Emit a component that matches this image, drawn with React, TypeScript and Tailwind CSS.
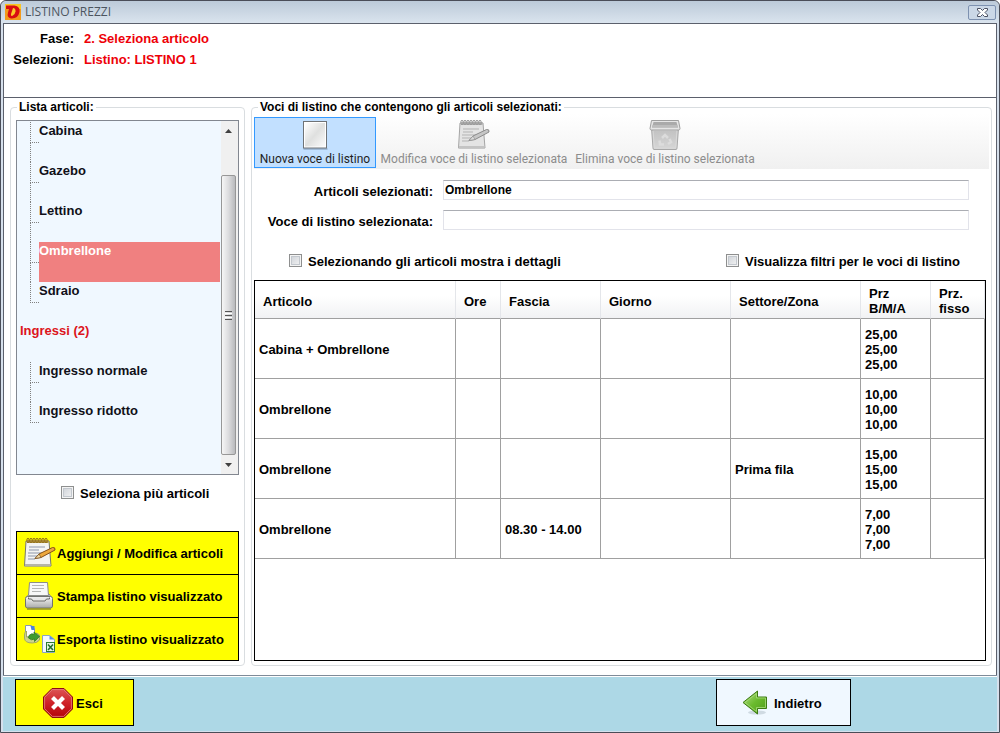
import React from "react"
import clsx from "clsx"

interface TreeItemProps {
  label: string
  selected?: boolean
  last?: boolean
}

interface PriceRow {
  articolo: string
  ore?: string
  fascia?: string
  giorno?: string
  settore?: string
  prezzi: string[]
  fisso?: string
}

const rows: PriceRow[] = [
  { articolo: "Cabina + Ombrellone", prezzi: ["25,00", "25,00", "25,00"] },
  { articolo: "Ombrellone", prezzi: ["10,00", "10,00", "10,00"] },
  { articolo: "Ombrellone", settore: "Prima fila", prezzi: ["15,00", "15,00", "15,00"] },
  { articolo: "Ombrellone", fascia: "08.30 - 14.00", prezzi: ["7,00", "7,00", "7,00"] },
]

const NotepadIcon = ({ gray = false }: { gray?: boolean }) => (
  <svg width="32" height="32" viewBox="0 0 32 32" className="shrink-0">
    <path d="M2 4h23l2 25H0.500z" fill={gray ? "#e4e4e4" : "#f4f4f2"} stroke={gray ? "#a5a5a5" : "#77776c"} />
    <path d="M1 27h25.500v2.500H.5z" fill={gray ? "#c4c4c4" : "#b5b5aa"} />
    <path d="M3 4.500h21.500" stroke={gray ? "#b0b0b0" : "#b39540"} strokeWidth="3" />
    {[4, 7, 10, 13, 16, 19, 22].map((x) => (
      <ellipse key={x} cx={x} cy="3.500" rx="1.200" ry="2.300" fill="none" stroke={gray ? "#9a9a9a" : "#93701c"} />
    ))}
    <path
      d="M5 10h16M5 13h10M4 16h16M4 19h9M4 22h7"
      stroke={gray ? "#b3b3b3" : "#8d96ab"}
      strokeWidth="1"
      fill="none"
    />
    <path d="M11 21.500l4-4.500L28.500 10.500q3-.5 2.500 2.500L17 20.500z" fill={gray ? "#c6c6c6" : "#eda83d"} stroke={gray ? "#8b8b8b" : "#85501a"} />
    <path d="M11 21.500l4-4.500 2 3.500z" fill={gray ? "#dadada" : "#f3d9a4"} stroke={gray ? "#8b8b8b" : "#6b4a20"} strokeWidth=".6" />
  </svg>
)

const PageIcon = () => (
  <svg width="32" height="32" viewBox="0 0 32 32">
    <defs>
      <linearGradient id="page" x1="0" y1="0" x2="1" y2="1">
        <stop offset="0" stopColor="#ffffff" />
        <stop offset=".5" stopColor="#dfe0df" />
        <stop offset="1" stopColor="#fafafa" />
      </linearGradient>
    </defs>
    <path d="M4.500 30h24" stroke="#7591ad" strokeWidth="1.500" opacity=".6" />
    <rect x="4.500" y="2.500" width="23" height="26.500" fill="#fff" stroke="#6f7376" />
    <rect x="6" y="4" width="20" height="23.500" fill="url(#page)" />
  </svg>
)

const BinIcon = () => (
  <svg width="32" height="32" viewBox="0 0 32 32">
    <defs>
      <linearGradient id="bin" x1="0" y1="0" x2="0" y2="1">
        <stop offset="0" stopColor="#c0c0c0" />
        <stop offset="1" stopColor="#d6d6d6" />
      </linearGradient>
    </defs>
    <path d="M2.500 9h27l-1.500 20q0 1.500-1 1.500H5q-1 0-1-1.500z" fill="url(#bin)" stroke="#a8a8a8" />
    <path d="M4 11.500h24l-1.300 17.500H5.300z" fill="none" stroke="#d9d9d9" />
    <path d="M2.500 1.500h27l1.500 8q0 1.500-1.500 1.500h-27q-1.500 0-1.500-1.500z" fill="#e6e6e6" stroke="#a0a0a0" />
    <path d="M4.500 3h23l1.500 5.500H3z" fill="#aaaaaa" />
    <path d="M3.700 6h24.600l.7 2.500H3z" fill="#bcbcbc" />
    <path d="M13 19l3-3 3 3M20.500 20l1.500 3-3 2M15 25.500h-4l-.5-4" fill="none" stroke="#dcdcdc" strokeWidth="2.500" />
  </svg>
)

const PrinterIcon = () => (
  <svg width="32" height="32" viewBox="0 0 32 32" className="shrink-0">
    <defs>
      <linearGradient id="printer" x1="0" y1="0" x2="0" y2="1">
        <stop offset="0" stopColor="#fafafa" />
        <stop offset="1" stopColor="#a9aaa9" />
      </linearGradient>
    </defs>
    <path d="M5 14h20l3 4H2z" fill="#c9cac8" stroke="#8a8b88" />
    <path d="M5.500 2.500h18l1 13h-20z" fill="#f7f7f7" stroke="#8b8c8a" />
    <path d="M8 5.500h12M8 8.500h12M8 11.500h9" stroke="#b4b5b4" />
    <rect x="1.500" y="16.500" width="27" height="11.500" rx="2" fill="url(#printer)" stroke="#71726f" />
    <path d="M4.500 17.500v1.500h3l1.500 2h12l1.500-2h3v-1.500" fill="#e8e8e7" stroke="#6a6b68" />
    <path d="M3 29h24" stroke="#8f8f2e" strokeWidth="1.500" />
  </svg>
)

const ExportIcon = () => (
  <svg width="32" height="32" viewBox="0 0 32 32" className="shrink-0">
    <path d="M1.500 2.500h6l3 3V14h-9z" fill="#fff" stroke="#8896b0" />
    <path d="M6.500 3h4v4h-3z" fill="#4a82e0" />
    <path d="M.5 12q0-3 2-4v6h8l2-4 3 2v5q-2 3-7 3-8 0-8-5z" fill="#cdd58a" stroke="#a3a868" />
    <path d="M5 12.500q3-3 5-1V9l5.500 4.500-5 5V16q-3 2-6-1z" fill="#3f9b2f" stroke="#2a741e" strokeWidth=".7" />
    <path d="M18.500 12.500h7l5 4V29.500h-12z" fill="#f4f8fd" stroke="#8aa3c5" />
    <path d="M25.500 12.500v4h5z" fill="#5a8fe6" />
    <rect x="22.500" y="19.500" width="8" height="9" fill="#e7f5e5" stroke="#2c7a35" />
    <path d="M24 21.500l5 5.500M29 21.500L24 27" stroke="#23702c" strokeWidth="1.600" />
  </svg>
)

const StopIcon = () => (
  <svg width="32" height="32" viewBox="0 0 32 32" className="shrink-0">
    <defs>
      <linearGradient id="stop" x1="0" y1="0" x2="0" y2="1">
        <stop offset="0" stopColor="#dc5656" />
        <stop offset=".5" stopColor="#cf2228" />
        <stop offset="1" stopColor="#b30309" />
      </linearGradient>
    </defs>
    <path d="M10 1.500h12L30.500 10v12L22 30.500H10L1.500 22V10z" fill="url(#stop)" stroke="#8c0d10" />
    <path d="M10.400 2.600h11.200L29.400 10.400v11.200L21.600 29.400H10.400L2.600 21.600V10.400z" fill="none" stroke="#e88080" strokeWidth=".8" />
    <path d="M10.500 10.500l11 11M21.500 10.500l-11 11" stroke="#fff" strokeWidth="4.200" />
  </svg>
)

const ArrowIcon = () => (
  <svg width="26" height="26" viewBox="0 0 26 26" className="shrink-0">
    <defs>
      <linearGradient id="arrow" x1="0" y1="0" x2="1" y2="1">
        <stop offset="0" stopColor="#b5dd8c" />
        <stop offset=".5" stopColor="#6bbb2e" />
        <stop offset="1" stopColor="#4c9b18" />
      </linearGradient>
    </defs>
    <ellipse cx="15" cy="22.500" rx="9" ry="2" fill="#b9c6cf" opacity=".6" />
    <path d="M1 12.500L15.500 1v6H24.500v11.500H15.500v5.500z" fill="url(#arrow)" stroke="#3c7a12" />
    <path d="M3 12.500L14.500 3.500V8h9v9.500h-9v4z" fill="none" stroke="#a9da7e" strokeWidth=".8" />
  </svg>
)

const AppLogo = () => (
  <svg width="16" height="16" viewBox="0 0 16 16" className="shrink-0">
    <rect width="16" height="16" fill="#f39a1a" />
    <path d="M0 0h16v5H0z" fill="#f9c623" />
    <path d="M1 1.500h8.500q6 1 5 6.500-1.500 7-8.500 6.500-4.500-1-3-6l1-3.500H1z" fill="#d90d12" />
    <path d="M8 4l-2 6q-.5 2.300 1.500 1.800 2.500-.8 3-4.300.3-3.500-2.500-3.500z" fill="#fbc929" />
  </svg>
)

const checkboxClass =
  "size-[13px] shrink-0 appearance-none border border-[#8e8f8f] bg-linear-to-br from-[#cbcfd5] to-[#f6f6f6] shadow-[inset_0_0_0_1px_#f4f4f4,inset_0_0_0_2px_#c3c8ce] checked:bg-[#4b6fa8]"

const CheckField = ({ id, label }: { id: string; label: string }) => (
  <div className="flex items-start gap-1.5">
    <input id={id} type="checkbox" className={checkboxClass} />
    <label htmlFor={id} className="leading-4">
      {label}
    </label>
  </div>
)

const TreeItem = ({ label, selected, last }: TreeItemProps) => (
  <li className="flex h-10 pl-[13px]">
    <div className="w-[9px] shrink-0">
      <div className="h-[21px] border-b border-l border-dotted border-[#808080]" />
      {!last && <div className="h-[19px] border-l border-dotted border-[#808080]" />}
    </div>
    <button
      type="button"
      className={clsx("flex flex-1 items-start text-left leading-[18px]", selected ? "bg-[#f08080] text-white" : "text-[#101018]")}
    >
      {label}
    </button>
  </li>
)

const ScrollBar = () => (
  <div className="flex w-[17px] shrink-0 flex-col bg-[#f0f0f0] pr-0.5">
    <button type="button" aria-label="Scorri su" className="flex h-[19px] items-center justify-center">
      <svg width="7" height="4" viewBox="0 0 7 4">
        <path d="M3.500 0L7 4H0z" fill="#404040" />
      </svg>
    </button>
    <div className="h-[35px]" />
    <div className="flex flex-1 items-center justify-center rounded-xs border border-[#979797] bg-linear-to-r from-[#f6f6f6] via-[#dcdcde] to-[#b9babd]">
      <div className="flex w-[7px] flex-col gap-px">
        <div className="h-px bg-[#555]" />
        <div className="h-px bg-white" />
        <div className="h-px bg-[#555]" />
        <div className="h-px bg-white" />
        <div className="h-px bg-[#555]" />
      </div>
    </div>
    <button type="button" aria-label="Scorri giù" className="flex h-[19px] items-center justify-center">
      <svg width="7" height="4" viewBox="0 0 7 4">
        <path d="M0 0h7L3.500 4z" fill="#404040" />
      </svg>
    </button>
  </div>
)

const ActionButton = ({ label, children }: { label: string; children: React.ReactNode }) => (
  <button type="button" className="-mb-px flex h-11 items-center gap-px border border-black bg-[#ffff00] pl-[7px] last:mb-0">
    {children}
    <span className="pt-0.5 whitespace-nowrap">{label}</span>
  </button>
)

interface ToolButtonProps {
  label: string
  width: string
  active?: boolean
  children: React.ReactNode
}

const ToolButton = ({ label, width, active, children }: ToolButtonProps) => (
  <button
    type="button"
    disabled={!active}
    className={clsx(
      "flex h-[51px] flex-col items-center border pt-px text-[12px] font-normal",
      width,
      active ? "border-[#3399ff] bg-[#c2e0ff] text-[#1e1e1e]" : "border-transparent text-[#8c8c8c]",
    )}
  >
    {children}
    <span className="leading-4 whitespace-nowrap">{label}</span>
  </button>
)

const ArticlesPanel = () => (
  <fieldset className="flex w-[235px] shrink-0 flex-col rounded-sm border border-[#d9dde0] px-[5px] pb-1">
    <legend className="ml-px px-0.5 text-[12px] leading-[14px]">Lista articoli:</legend>
    <div className="mt-1.5 flex min-h-[355px] flex-1 border border-[#828790] bg-[#f0f8ff]">
      <ul className="flex-1 pt-px pr-px">
        <TreeItem label="Cabina" />
        <TreeItem label="Gazebo" />
        <TreeItem label="Lettino" />
        <TreeItem label="Ombrellone" selected />
        <TreeItem label="Sdraio" last />
        <li className="h-10 pl-[3px] leading-[18px] text-[#dc1420]">Ingressi (2)</li>
        <TreeItem label="Ingresso normale" />
        <TreeItem label="Ingresso ridotto" last />
      </ul>
      <ScrollBar />
    </div>
    <div className="mt-[11px] mb-[29px] pl-[45px]">
      <CheckField id="multi" label="Seleziona più articoli" />
    </div>
    <div className="flex flex-col">
      <ActionButton label="Aggiungi / Modifica articoli">
        <NotepadIcon />
      </ActionButton>
      <ActionButton label="Stampa listino visualizzato">
        <PrinterIcon />
      </ActionButton>
      <ActionButton label="Esporta listino visualizzato">
        <ExportIcon />
      </ActionButton>
    </div>
  </fieldset>
)

const inputClass = "h-5 w-full border border-[#e2e3ea] border-t-[#abadb3] bg-white px-px text-[12px] outline-none"
const thClass =
  "border-r border-b border-r-[#e4e6ea] border-b-[#a0a0a0] bg-linear-to-b from-white from-40% to-[#f1f2f4] px-2 pt-[3px] text-left"
const tdClass = "border-r border-b border-[#a0a0a0] px-1 pt-px"

const PriceTable = () => (
  <div className="mt-[10px] mr-[3px] flex-1 border border-black">
    <table className="w-full table-fixed border-separate border-spacing-0 leading-[15px]">
      <colgroup>
        <col />
        <col className="w-[45px]" />
        <col className="w-[100px]" />
        <col className="w-[130px]" />
        <col className="w-[130px]" />
        <col className="w-[70px]" />
        <col className="w-[54px]" />
      </colgroup>
      <thead>
        <tr className="h-[38px]">
          <th className={thClass}>Articolo</th>
          <th className={thClass}>Ore</th>
          <th className={thClass}>Fascia</th>
          <th className={thClass}>Giorno</th>
          <th className={thClass}>Settore/Zona</th>
          <th className={thClass}>Prz B/M/A</th>
          <th className={thClass}>Prz. fisso</th>
        </tr>
      </thead>
      <tbody>
        {rows.map((r, i) => (
          <tr key={i} className="h-[60px]">
            <td className={tdClass}>{r.articolo}</td>
            <td className={tdClass}>{r.ore}</td>
            <td className={tdClass}>{r.fascia}</td>
            <td className={tdClass}>{r.giorno}</td>
            <td className={tdClass}>{r.settore}</td>
            <td className={tdClass}>
              {r.prezzi.map((p, j) => (
                <div key={j}>{p}</div>
              ))}
            </td>
            <td className={tdClass}>{r.fisso}</td>
          </tr>
        ))}
      </tbody>
    </table>
  </div>
)

const PricesPanel = () => (
  <fieldset className="flex min-w-0 flex-1 flex-col rounded-sm border border-[#d9dde0] px-0.5 pb-1">
    <legend className="ml-1 px-0.5 text-[12px] leading-[14px]">
      Voci di listino che contengono gli articoli selezionati:
    </legend>
    <div className="flex gap-px bg-linear-to-b from-white to-[#f0f0f0] pt-[3px] pb-px font-[Roboto,'Noto_Sans',sans-serif]">
      <ToolButton label="Nuova voce di listino" width="w-[122px]" active>
        <PageIcon />
      </ToolButton>
      <ToolButton label="Modifica voce di listino selezionata" width="w-[194px]">
        <NotepadIcon gray />
      </ToolButton>
      <ToolButton label="Elimina voce di listino selezionata" width="w-[186px]">
        <BinIcon />
      </ToolButton>
    </div>
    <div className="mt-[11px] mr-5 grid grid-cols-[179px_1fr] items-center gap-x-2.5 gap-y-2.5">
      <label htmlFor="articoli" className="pt-[3px] text-right leading-[17px]">
        Articoli selezionati:
      </label>
      <input id="articoli" className={inputClass} defaultValue="Ombrellone" />
      <label htmlFor="voce" className="pt-[3px] text-right leading-[17px]">
        Voce di listino selezionata:
      </label>
      <input id="voce" className={inputClass} />
    </div>
    <div className="mt-6 mr-[29px] flex justify-between pl-[35px]">
      <CheckField id="dettagli" label="Selezionando gli articoli mostra i dettagli" />
      <CheckField id="filtri" label="Visualizza filtri per le voci di listino" />
    </div>
    <PriceTable />
  </fieldset>
)

export default function App() {
  return (
    <div className="flex min-h-screen flex-col rounded-t-md border border-[#4a4d58] bg-[#d6e0ec] px-0.5 pb-px font-['Liberation_Sans',Arial,sans-serif] text-[13px] font-bold text-black">
      <header className="-mx-0.5 flex h-[22px] items-center gap-1 rounded-t-md bg-linear-to-b from-[#bccad9] to-[#dae4ee] pr-[3px] pl-1">
        <AppLogo />
        <h1 className="font-['Open_Sans','Noto_Sans',sans-serif] text-[12px] font-normal text-[#4c5560]">LISTINO PREZZI</h1>
        <button
          type="button"
          aria-label="Chiudi"
          className="ml-auto flex h-[15px] w-7 items-center justify-center rounded-xs border border-[#7d91b0] bg-[#cbd8e7]"
        >
          <svg width="11" height="9" viewBox="0 0 11 9">
            <path d="M.5.5h3l2 2 2-2h3v1.500L8 4.500l2.500 2.500v1.500h-3l-2-2-2 2h-3V7L3 4.500.5 2z" fill="#fff" stroke="#4b5163" />
          </svg>
        </button>
      </header>
      <div className="flex flex-1 flex-col border-x border-t border-[#5b606c] bg-white">
        <section className="grid h-[74px] grid-cols-[70px_1fr] content-start gap-x-2.5 border-b border-[#5b606c] pt-1 leading-[21px]">
          <span className="text-right">Fase:</span>
          <span className="text-[#ee0008]">2. Seleziona articolo</span>
          <span className="text-right">Selezioni:</span>
          <span className="text-[#ee0008]">Listino: LISTINO 1</span>
        </section>
        <main className="flex flex-1 gap-1.5 pt-0.5 pr-1 pb-[9px] pl-1.5">
          <ArticlesPanel />
          <PricesPanel />
        </main>
      </div>
      <footer className="flex h-14 items-start justify-between border-t border-[#7f8b99] bg-[#add8e6] pt-[3px] pr-[146px] pl-3 shadow-[inset_0_1px_0_#fff]">
        <button type="button" className="flex h-[47px] w-[119px] items-center gap-0.5 border border-black bg-[#ffff00] pl-[26px]">
          <StopIcon />
          <span className="pt-0.5">Esci</span>
        </button>
        <button type="button" className="flex h-[47px] w-[135px] items-center gap-1.5 border border-black bg-[#f0f8ff] pl-[25px]">
          <ArrowIcon />
          <span className="pt-0.5">Indietro</span>
        </button>
      </footer>
    </div>
  )
}
